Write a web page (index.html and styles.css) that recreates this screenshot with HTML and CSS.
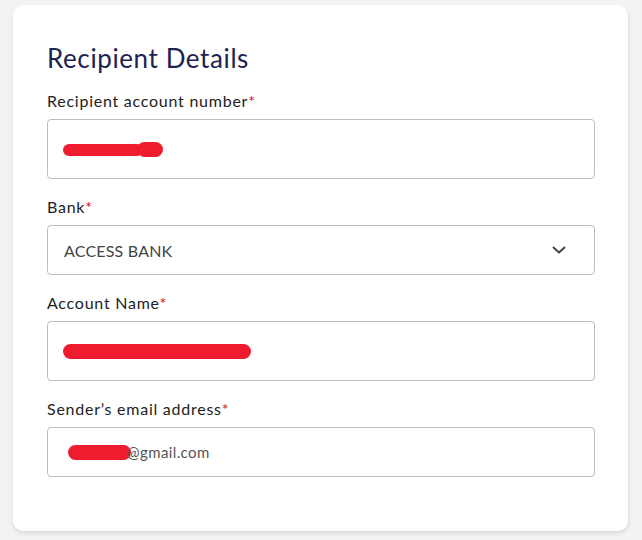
FILE: index.html
```html
<!DOCTYPE html>
<html>
<head>
<meta charset="utf-8">
<link rel="stylesheet" href="styles.css">
</head>
<body>
<div class="card">
  <h2 class="title">Recipient Details</h2>
  <div class="field">
    <label class="label">Recipient account number<span class="req">*</span></label>
    <div class="input tall"><span class="redact r1"></span><span class="redact r1b"></span></div>
  </div>
  <div class="field">
    <label class="label">Bank<span class="req">*</span></label>
    <div class="input short select">
      <span class="value">ACCESS BANK</span>
      <svg class="chev" width="14" height="8" viewBox="0 0 14 8"><path d="M1.5 1.5 L7 6.5 L12.5 1.5" fill="none" stroke="#444" stroke-width="2" stroke-linecap="round" stroke-linejoin="round"/></svg>
    </div>
  </div>
  <div class="field">
    <label class="label">Account Name<span class="req">*</span></label>
    <div class="input tall"><span class="redact r2"></span></div>
  </div>
  <div class="field">
    <label class="label">Sender’s email address<span class="req">*</span></label>
    <div class="input short"><span class="redact r3"></span><span class="email">@gmail.com</span></div>
  </div>
</div>
</body>
</html>
```

FILE: styles.css
```css
html, body {
  margin: 0;
  padding: 0;
}
body {
  background: #f3f3f3;
  font-family: Lato, "Noto Sans", sans-serif;
  width: 642px;
  height: 540px;
  overflow: hidden;
}
.card {
  margin: 5px 0 0 13px;
  width: 615px;
  height: 526px;
  box-sizing: border-box;
  background: #fff;
  border-radius: 10px;
  box-shadow: 0 3px 5px rgba(0, 0, 0, 0.08), 1px 1px 3px rgba(0,0,0,0.05);
  padding: 38px 33px 0 34px;
  display: flex;
  flex-direction: column;
}
.title {
  margin: 0 0 18px 0;
  font-weight: 400;
  font-size: 26px;
  line-height: 30px;
  color: #1d2350;
  letter-spacing: 0.6px;
}
.field {
  display: flex;
  flex-direction: column;
  margin-bottom: 18px;
}
.label {
  font-size: 16px;
  line-height: 20px;
  color: #222;
  letter-spacing: 0.75px;
  margin-bottom: 8px;
}
.req {
  color: #d0112b;
}
.input {
  border: 1px solid #bdbdbd;
  border-radius: 4px;
  box-sizing: border-box;
  display: flex;
  align-items: center;
  padding-left: 15px;
  padding-right: 28px;
}
.tall { height: 60px; }
.short { height: 50px; }
.select {
  justify-content: space-between;
  padding-left: 16px;
}
.value {
  font-size: 16px;
  color: #444;
  letter-spacing: 0.2px;
}
.chev {
  display: block;
}
.redact {
  display: inline-block;
  background: #ee1c2e;
  border-radius: 8px;
}
.r1 { width: 80px; height: 12px; margin-top: 1px; }
.r1b { width: 26px; height: 15px; margin-left: -6px; margin-top: 1px; }
.r2 { width: 188px; height: 15px; margin-top: 1px; }
.r3 { width: 63px; height: 15px; margin-left: 5px; margin-right: -4px; }
.email {
  font-size: 15px;
  color: #555;
  letter-spacing: 0.4px;
}
```
